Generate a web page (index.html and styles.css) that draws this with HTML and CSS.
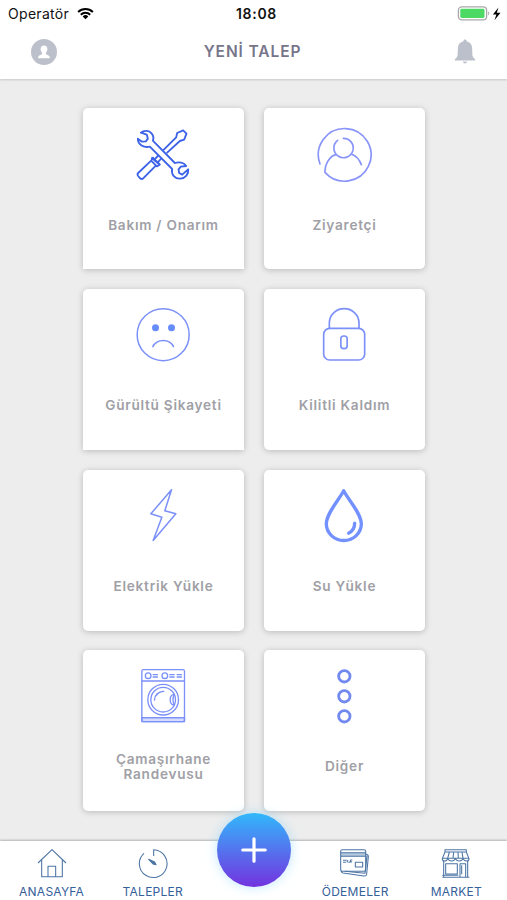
FILE: index.html
```html
<!DOCTYPE html>
<html lang="tr">
<head>
  <meta charset="UTF-8" />
  <meta name="viewport" content="width=device-width, initial-scale=1.0"/>
  <title>Yeni Talep</title>
  <link rel="stylesheet" href="styles.css">
</head>
<body>
  <div class="app">
    <header class="header">
      <div class="status-bar">
        <div class="carrier">
          <span>Operatör</span>
          <svg class="wifi" viewBox="0 0 18 13">
            <path d="M1.2 4.9a11.2 11.2 0 0 1 15.6 0M4 7.8a7.2 7.2 0 0 1 10 0" fill="none" stroke="#000" stroke-width="2.1"/>
            <path d="M9 12.6 6 9.6a4.3 4.3 0 0 1 6 0z"/>
          </svg>
        </div>
        <div class="clock">18:08</div>
        <div class="battery">
          <svg class="battery-icon" viewBox="0 0 46 16">
            <rect x="1.4" y="0.9" width="28.2" height="13" rx="3.4" fill="#fff" stroke="#a9a9a9" stroke-width="1.3"/>
            <rect x="3.3" y="2.8" width="24.2" height="9.2" rx="1.4" fill="#4cd964"/>
            <path d="M31.1 5.3q2.3 2.1 0 4.3z" fill="#a9a9a9"/>
            <path d="M41.5 1.4 35.9 8.4h3.5l-1.9 5.8 6-7.4h-3.7z"/>
          </svg>
        </div>
      </div>
      <div class="title-bar">
        <svg class="profile" viewBox="0 0 26 26">
          <circle cx="13" cy="13" r="13" fill="#bcc0ca"/>
          <path d="M13 6.4c2.2 0 3.4 1.5 3.4 3.6 0 1.5-.6 2.9-1.5 3.7v1.3c.4.9 3.9 1 3.9 3.5v.7H7.2v-.7c0-2.5 3.5-2.6 3.9-3.5v-1.3C10.2 12.9 9.6 11.5 9.6 10c0-2.1 1.2-3.6 3.4-3.6z" fill="#fff"/>
        </svg>
        <h1>YENİ TALEP</h1>
        <svg class="bell" viewBox="0 0 22 25">
          <path d="M11 .6c1 0 1.6.7 1.6 1.6 3.4.8 5.3 3.3 5.5 6.6l.3 7.2c.1 2 1.3 3.1 2.8 4.2v1.4H.8v-1.4c1.5-1.1 2.7-2.2 2.8-4.2l.3-7.2C4.1 5.5 6 3 9.4 2.2 9.4 1.3 10 .6 11 .6zM8.9 22.6h4.2c-.2 1.2-1 1.9-2.1 1.9s-1.9-.7-2.1-1.9z" fill="#bcc0ca"/>
        </svg>
      </div>
    </header>

    <main class="grid">
      <div class="card square-corner">
        <svg class="icon tools" viewBox="177.5 72 180 180">
          <path d="M267 149 304 112 307 99 325 91 335 101 328 119 315 123 277 158M249 168 239 178M258 177 248 188"/>
          <path d="M231 174 254 194M229 182l5-9 6 6 9 8 6 7-9 5zM229 182 190 219q-4 4 0 9l6 7q5 4 9 0L243 197"/>
          <path d="M198 98C208 90 223 91 230 100 236 107 237 115 234 122L300 189C312 185 328 187 334 198L318 200 311 208 313 219 322 224 340 208C342 222 332 235 316 236 301 237 288 224 292 207L225 140C207 144 189 134 189 116L201 125 213 124 219 116 216 104z"/>
        </svg>
        <div class="label">Bakım / Onarım</div>
      </div>

      <div class="card">
        <svg class="icon visitor" viewBox="181 72 180 180">
          <path d="M196 192A79 79 0 1 1 211 217C209 196 224 168 244 164M291 163C305 168 315 181 320 194"/>
          <path d="M249 121A29 29 0 1 0 266 115"/>
        </svg>
        <div class="label">Ziyaretçi</div>
      </div>

      <div class="card square-corner">
        <svg class="icon sad" viewBox="177.5 75 180 180">
          <circle cx="265" cy="164" r="78"/>
          <path d="M234 200C246 175 285 175 296 200"/>
          <circle class="solid" cx="242" cy="143" r="10.5"/>
          <circle class="solid" cx="290" cy="143" r="10.5"/>
        </svg>
        <div class="label">Gürültü Şikayeti</div>
      </div>

      <div class="card">
        <svg class="icon lock" viewBox="180 75 180 180">
          <path d="M223 145V129A44.5 43 0 0 1 312 129V145"/>
          <rect x="206" y="145" width="123" height="95" rx="18"/>
          <rect x="257.5" y="168" width="19" height="38" rx="8.5"/>
        </svg>
        <div class="label">Kilitli Kaldım</div>
      </div>

      <div class="card">
        <svg class="icon bolt" viewBox="177.5 77.5 180 180">
          <path d="M290 89 228 161 261 171 235 241 303 161 270 152z"/>
        </svg>
        <div class="label">Elektrik Yükle</div>
      </div>

      <div class="card">
        <svg class="icon drop" viewBox="180 77.5 180 180">
          <path d="M266 92C252 119 214 160 214 191A52.5 50 0 0 0 319 191C319 160 280 119 266 92z"/>
          <path d="M299 189Q299 209 281 219"/>
        </svg>
        <div class="label">Su Yükle</div>
      </div>

      <div class="card">
        <svg class="icon washer" viewBox="177.5 78 180 180">
          <rect class="base" x="201" y="233" width="128" height="12"/>
          <rect x="201" y="89" width="128" height="156" rx="5"/>
          <path d="M201 123H329M201 233H329"/>
          <circle cx="220" cy="107" r="8.5"/>
          <circle cx="270" cy="107" r="8.5"/>
          <path d="M235 104h13M235 111h13M285 104h13M285 111h13M307 104h13M307 111h13"/>
          <circle cx="265" cy="179" r="46"/>
          <circle cx="265" cy="179" r="37"/>
          <path d="M239 180Q241 155 267 154M244 167Q251 156 265 154M298 163C282 164 282 194 298 195M298 163Q291 179 298 195"/>
        </svg>
        <div class="label">Çamaşırhane<br>Randevusu</div>
      </div>

      <div class="card">
        <svg class="icon more" viewBox="180 78 180 180">
          <circle cx="268" cy="109" r="17"/>
          <circle cx="268" cy="169" r="17"/>
          <circle cx="268" cy="229" r="17"/>
        </svg>
        <div class="label">Diğer</div>
      </div>
    </main>

    <nav class="nav">
      <a class="nav-item">
        <svg viewBox="107 144 96 96">
          <path d="M113 189 155 149 197 189M124 180V230H186V180M143 230V199H166V230"/>
        </svg>
        <span>ANASAYFA</span>
      </a>
      <a class="nav-item">
        <svg viewBox="410 144 96 96">
          <path d="M431 160A41.5 41.5 0 1 0 460 149.5V168"/>
          <path class="needle" d="M445 178 463 186 467 194 458 192z"/>
        </svg>
        <span>TALEPLER</span>
      </a>
      <a class="nav-item">
        <span class="fab">
          <svg viewBox="0 0 26 26"><path d="M13 1.8V24.2M1.8 13H24.2"/></svg>
        </span>
      </a>
      <a class="nav-item">
        <svg viewBox="259 144 96 96">
          <path class="stripe" d="M265 158H339V169H265z"/>
          <path d="M269 149H334Q339 149 339 154V209Q339 214 334 214H269Q264 214 264 209V154Q264 149 269 149zM264 158H339M264 169H339"/>
          <path d="M339 162Q348 164 347 170L342 222Q341 229 334 228L271 219Q266 218 266 212M343 167 337 220 276 214"/>
          <path d="M308 187H330V201H308zM271 181H282M271 187H280M283 187 286 180M287 187H292L294 180H299M295 187 297 184"/>
        </svg>
        <span>ÖDEMELER</span>
      </a>
      <a class="nav-item">
        <svg viewBox="562 144 96 96">
          <path d="M577 149H641V156H577zM577 156 569 176Q569 183 576 183 583 183 585 175 588 183 597 183 605 183 608 175 611 183 620 183 628 183 631 175 634 183 642 183 649 183 649 176L641 156"/>
          <path d="M590 156 585 175M603 156 601 175M616 156 617 175M628 156 631 175M569 175H649"/>
          <path d="M573 183V230M645 183V230M569 232H650M569 226H617M579 191H614V222H579zM622 230V191H639V230M627 196V223"/>
        </svg>
        <span>MARKET</span>
      </a>
    </nav>
  </div>
</body>
</html>
```
FILE: styles.css
```css
* {
  box-sizing: border-box;
}

body {
  margin: 0;
  background: #ededed;
  font-family: Inter, "Liberation Sans", sans-serif;
}

.app {
  display: flex;
  flex-direction: column;
  height: 900px;
  overflow: hidden;
}

.header {
  height: 79px;
  background: #fff;
  box-shadow: 0 1px 2px rgba(0, 0, 0, 0.16);
}

.status-bar {
  display: grid;
  grid-template-columns: 1fr auto 1fr;
  align-items: center;
  height: 27px;
  padding: 0 4px 0 8px;
  color: #111;
}

.carrier {
  display: flex;
  align-items: center;
  gap: 8px;
  font-size: 14px;
  letter-spacing: 0.3px;
}

.wifi {
  width: 17px;
  height: 13px;
}

.clock {
  padding-left: 2px;
  font-size: 14px;
  font-weight: 600;
  letter-spacing: 0.7px;
}

.battery {
  display: flex;
  justify-content: flex-end;
}

.battery-icon {
  width: 46px;
  height: 16px;
}

.title-bar {
  display: grid;
  grid-template-columns: 1fr auto 1fr;
  align-items: center;
  height: 49px;
  padding: 0 31px;
}

.title-bar h1 {
  margin: 0 2px 0 0;
  color: #77758a;
  font-size: 15.5px;
  font-weight: 600;
  letter-spacing: 0.9px;
}

.profile {
  width: 26px;
  height: 26px;
}

.bell {
  justify-self: end;
  width: 22px;
  height: 25px;
}

.grid {
  flex: 1;
  display: grid;
  grid-template-columns: 161px 161px;
  grid-auto-rows: 161px;
  gap: 19.6px 20px;
  justify-content: center;
  align-content: start;
  padding: 29.4px 0 0 1px;
}

.card {
  display: flex;
  flex-direction: column;
  align-items: center;
  padding: 16px 4px 3.4px;
  background: #fff;
  border-radius: 5px;
  box-shadow: 0 1px 6px rgba(0, 0, 0, 0.22);
}

.square-corner {
  border-radius: 5px 5px 0 0;
}

.icon {
  width: 60px;
  height: 60px;
  fill: none;
  stroke: #7b90f8;
  stroke-width: 5;
  stroke-linecap: round;
  stroke-linejoin: round;
}

.tools {
  stroke: #3c62e8;
  stroke-width: 5.5;
}

.visitor {
  stroke: #8994fa;
}

.sad {
  stroke-width: 4.5;
}

.sad .solid {
  fill: #668cfa;
  stroke: none;
}

.bolt {
  stroke-width: 4.5;
}

.drop {
  stroke: #7390ff;
  stroke-width: 10;
}

.washer {
  stroke-width: 4;
}

.washer .base {
  fill: #d5dcfd;
}

.more {
  stroke: #7289f0;
  stroke-width: 8.5;
}

.label {
  flex: 1;
  display: flex;
  align-items: center;
  color: #a0a0a6;
  font-size: 13.6px;
  font-weight: 600;
  line-height: 15px;
  letter-spacing: 0.75px;
  text-align: center;
}

.nav {
  display: grid;
  grid-template-columns: repeat(5, 1fr);
  height: 59px;
  padding-left: 1px;
  background: #fff;
  box-shadow: 0 -1px 2px rgba(0, 0, 0, 0.25);
}

.nav-item {
  display: flex;
  flex-direction: column;
  align-items: center;
  padding-top: 7px;
  color: #35609a;
  font-size: 12px;
  letter-spacing: 0.25px;
}

.nav-item > svg {
  width: 32px;
  height: 32px;
  margin-bottom: 4px;
  fill: none;
  stroke: #4d75a5;
  stroke-width: 3.2;
  stroke-linejoin: round;
}

.nav-item .needle {
  fill: #4d75a5;
}

.nav-item .stripe {
  fill: #b5c8dc;
  stroke: none;
}

.fab {
  flex: none;
  display: flex;
  align-items: center;
  justify-content: center;
  width: 74px;
  height: 74px;
  margin-top: -35px;
  border-radius: 50%;
  background: linear-gradient(#31b8fb, #5474ee 50%, #7333df);
  box-shadow: 0 0 12px rgba(110, 205, 255, 0.45);
}

.fab svg {
  width: 26px;
  height: 26px;
  stroke: #fff;
  stroke-width: 3.2;
  stroke-linecap: round;
}
```
